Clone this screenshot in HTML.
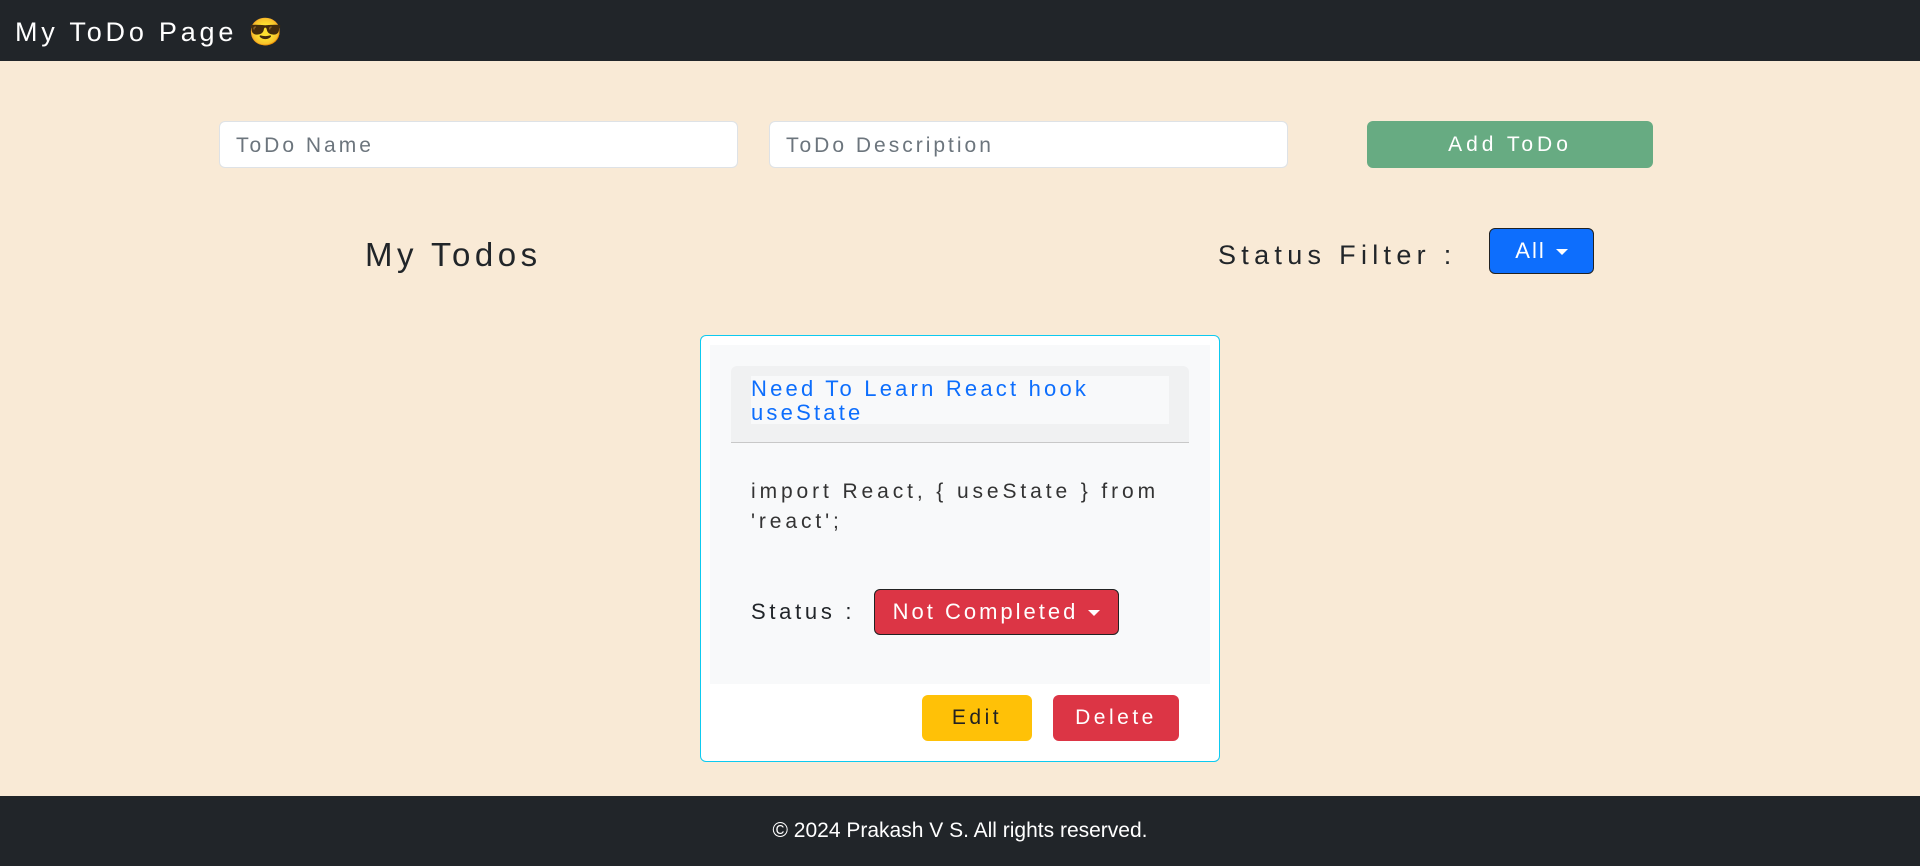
<!DOCTYPE html>
<html><head><meta charset="utf-8"><style>
*{box-sizing:border-box;margin:0;padding:0}
body{width:1920px;height:866px;background:#f9ead6;font-family:"Liberation Sans",sans-serif;position:relative;overflow:hidden}
.nav{position:absolute;left:0;top:0;width:1920px;height:61px;background:#212529;color:#fff;font-size:27px;padding:16px 0 0 15px;letter-spacing:3.8px}
.inp{position:absolute;top:121px;height:47px;background:#fff;border:1px solid #dee2e6;border-radius:6px;color:#6c757d;font-size:21px;padding:12px 16px;letter-spacing:3px}
.btn{position:absolute;border-radius:6px;color:#fff;font-size:21px;text-align:center;letter-spacing:3.5px}
.foot{position:absolute;left:0;top:796px;width:1920px;height:70px;background:#212529;color:#fff;font-size:21px;text-align:center;line-height:70px;letter-spacing:0}
.caret{display:inline-block;width:0;height:0;border-left:6px solid transparent;border-right:6px solid transparent;border-top:6px solid #fff;vertical-align:middle;margin-left:10px}
</style></head><body>
<div class="nav">My ToDo Page 😎</div>
<div class="inp" style="left:219px;width:519px">ToDo Name</div>
<div class="inp" style="left:769px;width:519px">ToDo Description</div>
<div class="btn" style="left:1367px;top:121px;width:286px;height:47px;background:#67ab82;line-height:47px;letter-spacing:4px">Add ToDo</div>
<div style="position:absolute;left:365px;top:236px;font-size:33px;color:#212529;letter-spacing:4.5px">My Todos</div>
<div style="position:absolute;left:1218px;top:240px;font-size:27px;color:#212529;letter-spacing:5.3px">Status Filter :</div>
<div class="btn" style="left:1489px;top:228px;width:105px;height:46px;background:#0d6efd;border:1px solid #222;line-height:44px;font-size:22px;letter-spacing:2px">All<span class="caret"></span></div>
<div style="position:absolute;left:700px;top:335px;width:520px;height:427px;background:#fff;border:1px solid #0dcaf0;border-radius:6px"></div>
<div style="position:absolute;left:710px;top:345px;width:500px;height:339px;background:#f8f9fa"></div>
<div style="position:absolute;left:731px;top:366px;width:458px;height:77px;background:#f0f1f2;border-bottom:1px solid #c8c8c8;border-radius:6px 6px 0 0"></div>
<div style="position:absolute;left:751px;top:376px;width:418px;height:48px;background:#f8f9fa"></div>
<div style="position:absolute;left:751px;top:377px;width:440px;font-size:22px;line-height:24px;color:#0d6efd;letter-spacing:3.2px">Need To Learn React hook<br>useState</div>
<div style="position:absolute;left:751px;top:477px;width:440px;font-size:21px;line-height:30px;color:#333;letter-spacing:3.9px">import React, { useState } from<br>'react';</div>
<div style="position:absolute;left:751px;top:599px;font-size:22px;color:#212529;letter-spacing:3.7px">Status :</div>
<div class="btn" style="left:874px;top:589px;width:245px;height:46px;background:#dc3545;border:1px solid #222;line-height:44px;font-size:22px;letter-spacing:3px">Not Completed<span class="caret"></span></div>
<div class="btn" style="left:922px;top:695px;width:110px;height:46px;background:#ffc107;color:#222;line-height:46px">Edit</div>
<div class="btn" style="left:1053px;top:695px;width:126px;height:46px;background:#dc3545;line-height:46px">Delete</div>
<div class="foot">© 2024 Prakash V S. All rights reserved.</div>
</body></html>
